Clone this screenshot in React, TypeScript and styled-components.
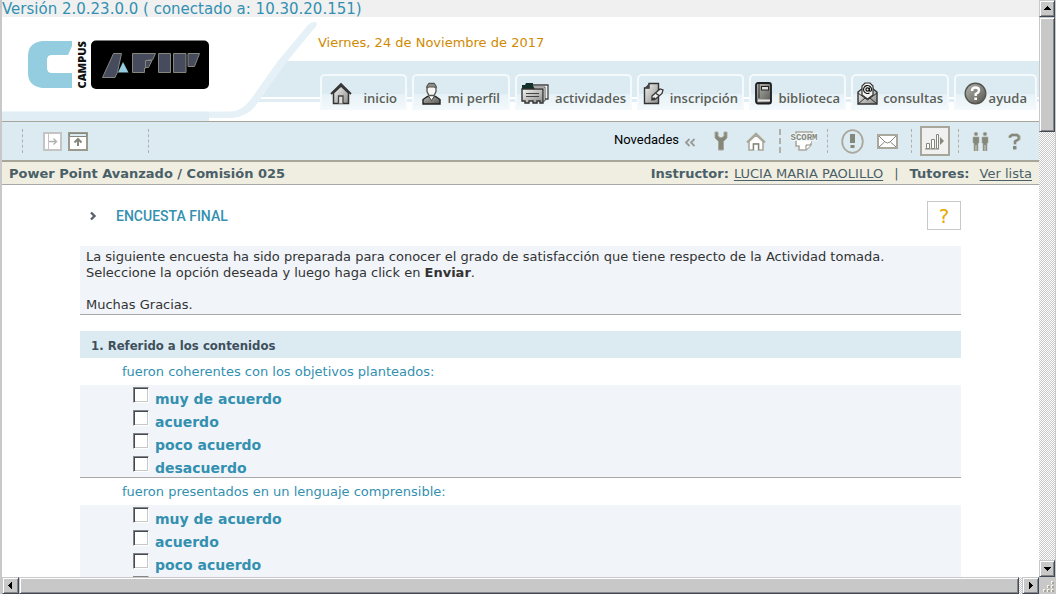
import React from "react";
import styled, { createGlobalStyle, css } from "styled-components";

const verdana = `"DejaVu Sans", Verdana, sans-serif`;

const GlobalStyle = createGlobalStyle`
  * { box-sizing: border-box; }
  body { margin: 0; background: #fff; font-family: ${verdana}; }
  button { font: inherit; padding: 0; cursor: pointer; }
`;

/* ---------- window frame and scroll bars ---------- */

const Window = styled.div`
  display: grid;
  grid-template-columns: minmax(0, 1fr) 16px;
  grid-template-rows: minmax(0, 1fr) 17px;
  height: 100vh;
  border-left: 2px solid #c8c8c8;
  border-right: 1px solid #c8c8c8;
  overflow: hidden;
`;

const Pane = styled.div`
  overflow: hidden;
  background: #fff;
`;

const Track = styled.div<{ $vertical?: boolean }>`
  display: flex;
  flex-direction: ${(p) => (p.$vertical ? "column" : "row")};
  background: repeating-conic-gradient(#fff 0 25%, #c8c8c8 0 50%) 0 0 / 2px 2px;
`;

const raised = css`
  background: #c8c8c8;
  border: 1px solid;
  border-color: #c8c8c8 #404a56 #404a56 #c8c8c8;
  box-shadow: inset 1px 1px #fff, inset -1px -1px #868686;
`;

const ArrowButton = styled.button`
  ${raised}
  display: flex;
  align-items: center;
  justify-content: center;
  flex: 0 0 17px;
`;

const Thumb = styled.div<{ $size: string }>`
  ${raised}
  flex: 0 0 ${(p) => p.$size};
`;

const Spacer = styled.div`
  flex: 1;
`;

const Grip = styled.div`
  display: flex;
  align-items: flex-end;
  justify-content: flex-end;
  background: #c8c8c8;
`;

const Arrow = ({ d }: { d: string }) => (
  <svg width="9" height="9" viewBox="0 0 9 9" shapeRendering="crispEdges" aria-hidden>
    <path d={d} fill="#000" />
  </svg>
);

/* ---------- header ---------- */

const VersionBar = styled.div`
  height: 17px;
  background: #f0f0f0;
  color: #3390b0;
  font-size: 15px;
  line-height: 19px;
  white-space: nowrap;
`;

const Header = styled.header`
  position: relative;
  display: flex;
  justify-content: space-between;
  height: 104px;
  background: linear-gradient(
    #fff 44px, #dcebf2 44px, #dcebf2 80px, #fff 80px, #fff 82px,
    #e0edf4 82px, #e0edf4 85px, #fff 85px
  );
`;

const HeaderArt = styled.svg`
  position: absolute;
  left: 0;
  top: 0;
`;

const Logo = styled.svg`
  position: relative;
  flex: none;
  margin: 22px 0 0 24px;
`;

const HeaderMain = styled.div`
  position: relative;
  display: flex;
  flex-direction: column;
  justify-content: space-between;
  flex: 0 1 721px;
  min-width: 0;
  padding: 17px 2px 11px 0;
`;

const DateLine = styled.div`
  color: #d08a00;
  font-size: 13px;
  line-height: 18px;
`;

const Tabs = styled.nav`
  display: flex;
  align-items: flex-end;
  gap: 5px;
  padding-left: 2px;
`;

const Tab = styled.a<{ $width: number; $roomy?: boolean }>`
  display: flex;
  align-items: flex-end;
  justify-content: space-between;
  flex: 0 1 ${(p) => p.$width}px;
  height: 36px;
  padding: 0 ${(p) => (p.$roomy ? 8 : 4)}px 2px;
  border: 2px solid #f4f9fc;
  border-bottom: 0;
  border-radius: 5px 5px 0 0;
  background: linear-gradient(#dcebf2 18px, #e6f1f7 18px, #f4f9fc);
  color: #5a6058;
  font-family: "Open Sans", sans-serif;
  font-size: 13px;
  font-weight: 600;
  line-height: 20px;
  text-decoration: none;
  white-space: nowrap;
  svg { flex: none; margin-bottom: 3px; }
`;

/* ---------- toolbar ---------- */

const Toolbar = styled.div`
  display: flex;
  align-items: center;
  justify-content: space-between;
  height: 41px;
  padding: 0 18px 0 20px;
  border-top: 1px solid #a8a69a;
  border-bottom: 2px solid #a8a69a;
  background: #dcebf2;
`;

const ToolGroup = styled.div<{ $gap: number }>`
  display: flex;
  align-items: center;
  gap: ${(p) => p.$gap}px;
`;

const ToolButton = styled.button<{ $active?: boolean }>`
  display: flex;
  align-items: center;
  justify-content: center;
  border: 0;
  background: none;
  ${(p) =>
    p.$active &&
    css`
      width: 30px;
      height: 30px;
      border: 2px solid #a8a69a;
      background: #f0f0f0;
    `}
`;

const Divider = styled.span<{ $bold?: boolean }>`
  height: 24px;
  border-left: ${(p) => (p.$bold ? 2 : 1)}px dashed #b0b0a8;
`;

const News = styled.a`
  display: flex;
  align-items: center;
  gap: 5px;
  margin-bottom: 4px;
  color: #000;
  font-family: Roboto, sans-serif;
  font-size: 13px;
  text-decoration: none;
  svg { margin-top: 6px; }
`;

/* ---------- course bar ---------- */

const CourseBar = styled.div`
  display: flex;
  justify-content: space-between;
  height: 23px;
  padding: 0 7px;
  border-bottom: 1px solid #a8a8a8;
  background: #f0eee1;
  color: #4a5f68;
  font-size: 13px;
  line-height: 24px;
  white-space: nowrap;
`;

const Staff = styled.div`
  display: flex;
  gap: 5px;
  a { color: inherit; text-underline-offset: 2px; }
  a:last-child { margin-left: 5px; }
`;

const Pipe = styled.span`
  padding: 0 6px;
`;

/* ---------- survey ---------- */

const Survey = styled.main`
  margin: 16px 78px 0;
`;

const TitleRow = styled.div`
  display: flex;
  align-items: center;
  height: 29px;
  margin-bottom: 16px;
  padding-left: 10px;
`;

const Title = styled.h1`
  flex: 1;
  margin: 0 0 0 19px;
  color: #3390b0;
  font-family: Roboto, sans-serif;
  font-size: 14px;
  font-weight: 500;
`;

const HelpButton = styled.button`
  width: 34px;
  height: 29px;
  border: 1px solid #c8c8c8;
  background: #fff;
  color: #e8a800;
  font-size: 20px;
  line-height: 26px;
`;

const Intro = styled.div`
  margin-bottom: 16px;
  padding: 3px 6px 1px;
  border-bottom: 1px solid #a8a8a8;
  background: #f1f5fa;
  color: #333;
  font-size: 13px;
  line-height: 16px;
  p { margin: 0 0 16px; }
  p:last-child { margin: 0; }
`;

const SectionTitle = styled.h2`
  height: 27px;
  margin: 0;
  padding-left: 11px;
  background: #dcebf2;
  color: #404f5c;
  font-family: "DejaVu Sans Condensed", "DejaVu Sans", sans-serif;
  font-size: 13px;
  line-height: 29px;
`;

const Question = styled.fieldset`
  min-width: 0;
  margin: 0;
  padding: 0;
  border: 0;
  border-bottom: 1px solid #a8a8a8;
`;

const Prompt = styled.legend`
  height: 27px;
  padding: 0 0 0 42px;
  color: #3390b0;
  font-size: 13px;
  line-height: 28px;
`;

const Options = styled.div`
  background: #f1f5fa;
`;

const Option = styled.label`
  display: flex;
  gap: 6px;
  height: 23px;
  padding: 2px 0 0 53px;
  color: #3390b0;
  font-size: 14px;
  font-weight: bold;
  line-height: 25px;
`;

const Box = styled.input`
  appearance: none;
  flex: none;
  width: 16px;
  height: 16px;
  margin: 0;
  border: 1px solid;
  border-color: #868686 #fff #fff #868686;
  background: #fff;
  box-shadow: inset 1px 1px #404a56, inset -1px -1px #c8c8c8;
  &:checked { background: #404a56; }
`;

/* ---------- tab icons ---------- */

const Shades = () => (
  <defs>
    <linearGradient id="metal" x1="0" y1="0" x2="1" y2="1">
      <stop offset="0" stopColor="#f4f4f2" />
      <stop offset="1" stopColor="#8c8c8a" />
    </linearGradient>
    <linearGradient id="dark" x1="0" y1="0" x2="1" y2="1">
      <stop offset="0" stopColor="#b8b8b4" />
      <stop offset="1" stopColor="#55554f" />
    </linearGradient>
  </defs>
);

const HomeIcon = () => (
  <svg width="22" height="23" viewBox="0 0 22 23">
    <Shades />
    <path d="M3.500 11L11 4l7.500 7v10.500h-15z" fill="url(#metal)" stroke="#333" strokeWidth="1.500" />
    <path d="M1 12L11 2l10 10" fill="none" stroke="#333" strokeWidth="1.800" />
    <path d="M8.500 21.500V14h4.500v7.500" fill="#ddd" stroke="#444" strokeWidth="1.300" />
  </svg>
);

const UserIcon = () => (
  <svg width="19" height="23" viewBox="0 0 19 23">
    <path d="M1 22v-4.500l4.500-3h8l4.500 3V22z" fill="url(#dark)" stroke="#222" strokeWidth="1.400" />
    <path d="M6.500 14l3 4.500 3-4.500" fill="#fff" stroke="#444" />
    <path d="M5 4.500L7 1.500h5l2 3v5L12 13.500H7L5 9.500z" fill="#f6f6f4" stroke="#55554f" strokeWidth="1.300" />
    <path d="M5 6V4l2-2.500h5L14 4v2l-2-1H7z" fill="#8f8f89" stroke="#55554f" />
  </svg>
);

const FoldersIcon = () => (
  <svg width="28" height="23" viewBox="0 0 28 23">
    <path d="M12 3h15v14h-4" fill="#eee" stroke="#444" strokeWidth="1.300" />
    <path d="M12 5h12v14h-2" fill="#fff" stroke="#555" />
    <path d="M1 7V3h3l1-2h7v3l2 3z" fill="#12312b" />
    <path d="M1 7h21v14h-3v-2h-3v2h-4v-2H8v2H4v-2H1z" fill="url(#metal)" stroke="#333" strokeWidth="1.400" />
    <path d="M5 11.500h13M5 14.500h13" stroke="#444" />
  </svg>
);

const EnrolIcon = () => (
  <svg width="21" height="23" viewBox="0 0 21 23">
    <path d="M1.500 6H6V1.500h9.500v20h-14z" fill="url(#metal)" stroke="#333" strokeWidth="1.400" />
    <path d="M1.500 6L6 1.500V6z" fill="#444" />
    <path d="M9 14l8-7 3 1-1 3.500-7 6-3 .5z" fill="#eee" stroke="#333" strokeWidth="1.300" />
    <path d="M13 11.500l3 2M9 17l3-1" stroke="#333" strokeWidth="1.500" />
  </svg>
);

const BookIcon = () => (
  <svg width="17" height="23" viewBox="0 0 17 23">
    <rect x="1" y="1" width="15" height="20.500" rx="2" fill="url(#dark)" stroke="#1d1d22" strokeWidth="1.800" />
    <path d="M3 18.500h12" stroke="#e8e8e8" strokeWidth="2" />
    <path d="M4 2v14" stroke="#333" />
    <rect x="6.500" y="4.500" width="7" height="3.500" fill="#ddd" stroke="#222" />
  </svg>
);

const MailAtIcon = () => (
  <svg width="21" height="23" viewBox="0 0 21 23">
    <path d="M1 10l4-3h11l4 3v12H1z" fill="url(#metal)" stroke="#333" strokeWidth="1.400" />
    <path d="M5 13V4l3-3h5l3 3v9l-5.500 4z" fill="#f4f4f2" stroke="#333" strokeWidth="1.200" />
    <path d="M1 11l9.500 7L20 11M1 22l7-6M20 22l-7-6" fill="none" stroke="#333" />
    <circle cx="10.500" cy="7.500" r="1.600" fill="none" stroke="#111" strokeWidth="1.200" />
    <path d="M12.500 5.500v3.500q2 1 2-2a4 4 0 1 0-2 4" fill="none" stroke="#111" strokeWidth="1.100" />
  </svg>
);

const HelpIcon = () => (
  <svg width="23" height="23" viewBox="0 0 23 23">
    <circle cx="11.500" cy="11.500" r="10.300" fill="url(#dark)" stroke="#55554f" strokeWidth="1.400" />
    <path d="M8 9q0-3.500 3.500-3.500T15 8.500q0 2-3.300 3.500v2" fill="none" stroke="#fff" strokeWidth="2.400" />
    <path d="M10.300 15.500h2.700v2.500h-2.700z" fill="#fff" />
  </svg>
);

/* ---------- toolbar icons ---------- */

const tone = "#84887a";
const edge = "#aaa89c";

const PanelRightIcon = () => (
  <svg width="19" height="19" viewBox="0 0 19 19">
    <path d="M1 1h17v17H1z" fill="#fff" stroke="#c4c4c4" strokeWidth="2" />
    <path d="M5.500 2v15" stroke="#c4c4c4" />
    <path d="M6 9.500h7M10.500 6.500l3 3-3 3" fill="none" stroke="#b0b0b0" strokeWidth="1.300" />
  </svg>
);

const PanelUpIcon = () => (
  <svg width="20" height="19" viewBox="0 0 20 19">
    <path d="M1 1h18v17H1z" fill="#fff" stroke="#9c9a8c" strokeWidth="2" />
    <path d="M1.500 1.500h17v3h-17z" fill="#dcebf2" stroke={tone} />
    <path d="M10 14V8M6.500 10.500L10 7l3.500 3.500" fill="none" stroke={tone} strokeWidth="2" />
  </svg>
);

const ChevronsIcon = () => (
  <svg width="12" height="9" viewBox="0 0 12 9">
    <path d="M5.500 1L2 4.500 5.500 8M10.500 1L7 4.500 10.500 8" fill="none" stroke="#999" strokeWidth="1.800" />
  </svg>
);

const WrenchIcon = () => (
  <svg width="14" height="20" viewBox="0 0 14 20">
    <path d="M1 1h3v4l2 1.500h2L10 5V1h3v6l-3.500 3.500V19h-5v-8.500L1 7z" fill={tone} stroke={edge} />
  </svg>
);

const ToolHomeIcon = () => (
  <svg width="20" height="19" viewBox="0 0 20 19">
    <path d="M3 9.500L10 3l7 6.500V18h-4.500v-6h-5v6H3z" fill="#fff" stroke={edge} strokeWidth="1.600" />
    <path d="M1 10.500L10 2l9 8.500" fill="none" stroke={edge} strokeWidth="2.400" />
    <path d="M7.500 18v-6h5v6" fill="#fff" stroke={tone} strokeWidth="1.400" />
  </svg>
);

const ScormIcon = () => (
  <svg width="28" height="20" viewBox="0 0 28 20">
    <path d="M6 4V1h16v3M6 10v5h3v4h7l5-5v-4" fill="#fff" stroke={edge} strokeWidth="1.600" />
    <path d="M7 3h14v9H7z" fill="#fff" />
    <path d="M16 18.500V14h5" fill="#fff" stroke={tone} />
    <text
      x="14" y="9" textAnchor="middle" fontFamily="Liberation Mono, monospace" fontSize="9"
      fontWeight="bold" fill={tone} stroke="#eef5f8" strokeWidth="2" paintOrder="stroke"
    >
      SCORM
    </text>
  </svg>
);

const AlertIcon = () => (
  <svg width="23" height="25" viewBox="0 0 23 25">
    <ellipse cx="11.500" cy="12.500" rx="10.300" ry="11.300" fill="none" stroke={edge} strokeWidth="1.800" />
    <path d="M9 5h5v9H9zM9.500 16h4v3h-4z" fill={tone} />
  </svg>
);

const EnvelopeIcon = () => (
  <svg width="21" height="15" viewBox="0 0 21 15">
    <path d="M1 1h19v13H1z" fill="#fff" stroke={edge} strokeWidth="2" />
    <path d="M2 2l6 6q2.500 2 5 0l6-6M2 13l5.500-5M19 13l-5.500-5" fill="none" stroke={tone} />
  </svg>
);

const ChartIcon = () => (
  <svg width="20" height="17" viewBox="0 0 20 17">
    <path d="M1.500 15.500v-5h3v5zM6.500 15.500v-9h3v9zM11.500 15.500V1.500h2v14z" fill="#fff" stroke={tone} />
    <path d="M0 16h14" stroke={tone} />
    <path d="M15 4l4 4-4 4z" fill={tone} />
  </svg>
);

const PeopleIcon = () => (
  <svg width="17" height="19" viewBox="0 0 17 19" fill={tone} stroke={edge} strokeWidth=".6">
    <circle cx="4" cy="2" r="1.800" />
    <path d="M1 5h6v6H6v8H4.500v-6h-1v6H2v-8H1z" />
    <circle cx="13" cy="2" r="1.800" />
    <path d="M10 5h6v6h-1v8h-1.500v-6h-1v6H11v-8h-1z" />
  </svg>
);

const QuestionIcon = () => (
  <svg width="13" height="17" viewBox="0 0 13 17">
    <path d="M2 5V3.500L4 2h5l2 1.500V6L7 8.500v3" fill="none" stroke={edge} strokeWidth="3" />
    <path d="M2 4.500V3.500L4 2h5l1.500 1.500V6L7 8.500v2.500" fill="none" stroke={tone} strokeWidth="1.800" />
    <path d="M5 13h3.500v3.500H5z" fill={tone} />
  </svg>
);

/* ---------- data ---------- */

const tabs = [
  { label: "inicio", width: 87, roomy: true, Icon: HomeIcon },
  { label: "mi perfil", width: 98, roomy: true, Icon: UserIcon },
  { label: "actividades", width: 117, Icon: FoldersIcon },
  { label: "inscripción", width: 107, Icon: EnrolIcon },
  { label: "biblioteca", width: 97, Icon: BookIcon },
  { label: "consultas", width: 98, Icon: MailAtIcon },
  { label: "ayuda", width: 83, roomy: true, Icon: HelpIcon },
];

const questions = [
  "fueron coherentes con los objetivos planteados:",
  "fueron presentados en un lenguaje comprensible:",
];

const answers = ["muy de acuerdo", "acuerdo", "poco acuerdo", "desacuerdo"];

export default function App() {
  return (
    <>
      <GlobalStyle />
      <Window>
        <Pane>
          <VersionBar>Versión 2.0.23.0.0 ( conectado a: 10.30.20.151)</VersionBar>
          <Header>
            <HeaderArt width="330" height="104" viewBox="2 17 330 104" aria-hidden>
              <path d="M2 17H318L281 61 256 99Q246 121 230 121H2z" fill="#fff" />
              <path d="M8 111.500H209V121H2V111.500z" fill="#e0edf5" />
              <path d="M209 111.500H230Q243 111 251 99L278 61 308 25Q313 20 317 23 318 25 312 31L285 64 259 101Q249 117 232 118H209z" fill="#e6f1f7" />
            </HeaderArt>
            <Logo width="184" height="51" viewBox="26 39 184 51" role="img" aria-label="Campus AFIP">
              <path d="M42 41H72V46L68 55H52Q47 55 47 60V68Q47 73 52 73H72V88H42Q28 86 28 73V56Q28 43 42 41z" fill="#94cce0" />
              <text x="86" y="88.500" transform="rotate(-90 86 88.500)" fontFamily="Open Sans, sans-serif" fontSize="11" fontWeight="800" fill="#111">CAMPUS</text>
              <rect x="91" y="40.500" width="118" height="48.500" rx="5" fill="#000" />
              <g fill="#464c5e" stroke="#85867c">
                <path d="M113.500 53.500H121.500L117.500 72 115 77.500H102.500z" />
                <path d="M132.500 53.500H155.500L152.500 60H148L146 68H144.500V72.500H132.500z" />
                <path d="M145.500 60.500H152L148.500 67.500H145.500z" />
                <path d="M158.500 53.500H170.500V72.500H158.500z" />
                <path d="M173.500 53.500H186V72.500H173.500z" />
                <path d="M188 53.500H199.500L194.500 66.500H188z" />
              </g>
              <path d="M123 62L128.500 72.500H118z" fill="#94cce0" />
            </Logo>
            <HeaderMain>
              <DateLine>Viernes, 24 de Noviembre de 2017</DateLine>
              <Tabs>
                {tabs.map(({ label, width, roomy, Icon }) => (
                  <Tab key={label} href="#" $width={width} $roomy={roomy}>
                    <Icon />
                    {label}
                  </Tab>
                ))}
              </Tabs>
            </HeaderMain>
          </Header>

          <Toolbar>
            <ToolGroup $gap={20}>
              <Divider />
              <ToolGroup $gap={6}>
                <ToolButton aria-label="Mostrar panel"><PanelRightIcon /></ToolButton>
                <ToolButton aria-label="Subir panel"><PanelUpIcon /></ToolButton>
              </ToolGroup>
              <Spacer />
              <Spacer />
              <Divider />
            </ToolGroup>
            <ToolGroup $gap={13}>
              <ToolGroup $gap={18}>
                <News href="#">Novedades <ChevronsIcon /></News>
                <ToolButton aria-label="Herramientas"><WrenchIcon /></ToolButton>
                <ToolButton aria-label="Inicio"><ToolHomeIcon /></ToolButton>
              </ToolGroup>
              <ToolGroup $gap={9}>
                <Divider $bold />
                <ToolButton aria-label="SCORM"><ScormIcon /></ToolButton>
                <Divider />
              </ToolGroup>
              <ToolButton aria-label="Avisos"><AlertIcon /></ToolButton>
              <ToolButton aria-label="Correo"><EnvelopeIcon /></ToolButton>
              <ToolGroup $gap={8}>
                <Divider />
                <ToolButton $active aria-label="Estadísticas"><ChartIcon /></ToolButton>
                <Divider />
              </ToolGroup>
              <ToolGroup $gap={19}>
                <ToolButton aria-label="Participantes"><PeopleIcon /></ToolButton>
                <ToolButton aria-label="Ayuda"><QuestionIcon /></ToolButton>
              </ToolGroup>
            </ToolGroup>
          </Toolbar>

          <CourseBar>
            <strong>Power Point Avanzado / Comisión 025</strong>
            <Staff>
              <strong>Instructor:</strong>
              <a href="#">LUCIA MARIA PAOLILLO</a>
              <Pipe>|</Pipe>
              <strong>Tutores:</strong>
              <a href="#">Ver lista</a>
            </Staff>
          </CourseBar>

          <Survey>
            <TitleRow>
              <svg width="7" height="10" viewBox="0 0 7 10" aria-hidden>
                <path d="M1 1.500L4.500 5 1 8.500" fill="none" stroke="#5a6068" strokeWidth="2.400" />
              </svg>
              <Title>ENCUESTA FINAL</Title>
              <HelpButton>?</HelpButton>
            </TitleRow>
            <Intro>
              <p>
                La siguiente encuesta ha sido preparada para conocer el grado de satisfacción que
                tiene respecto de la Actividad tomada.
                <br />
                Seleccione la opción deseada y luego haga click en <strong>Enviar</strong>.
              </p>
              <p>Muchas Gracias.</p>
            </Intro>
            <SectionTitle>1. Referido a los contenidos</SectionTitle>
            {questions.map((question) => (
              <Question key={question}>
                <Prompt>{question}</Prompt>
                <Options>
                  {answers.map((answer) => (
                    <Option key={answer}>
                      <Box type="checkbox" />
                      {answer}
                    </Option>
                  ))}
                </Options>
              </Question>
            ))}
          </Survey>
        </Pane>

        <Track $vertical>
          <ArrowButton aria-label="Desplazar arriba"><Arrow d="M4 2h1v1h1v1h1v1h1v1H1V5h1V4h1V3h1z" /></ArrowButton>
          <Thumb $size="20%" />
          <Spacer />
          <ArrowButton aria-label="Desplazar abajo"><Arrow d="M1 3h7v1H7v1H6v1H5v1H4V6H3V5H2V4H1z" /></ArrowButton>
        </Track>
        <Track>
          <ArrowButton aria-label="Desplazar a la izquierda"><Arrow d="M6 1v7H5V7H4V6H3V5H2V4h1V3h1V2h1V1z" /></ArrowButton>
          <Thumb $size="calc(100% - 37px)" />
          <Spacer />
          <ArrowButton aria-label="Desplazar a la derecha"><Arrow d="M3 1v7h1V7h1V6h1V5h1V4H6V3H5V2H4V1z" /></ArrowButton>
        </Track>
        <Grip>
          <svg width="14" height="14" viewBox="0 0 14 14" shapeRendering="crispEdges" aria-hidden>
            <path d="M11 2h2v2h-2zM7 6h2v2H7zM11 6h2v2h-2zM3 10h2v2H3zM7 10h2v2H7zM11 10h2v2h-2z" fill="#a8a69a" />
            <path d="M10 1h2v1h-1v2h-1zM6 5h2v1H7v2H6zM10 5h2v1h-1v2h-1zM2 9h2v1H3v2H2zM6 9h2v1H7v2H6zM10 9h2v1h-1v2h-1z" fill="#f4f4e8" />
          </svg>
        </Grip>
      </Window>
    </>
  );
}
